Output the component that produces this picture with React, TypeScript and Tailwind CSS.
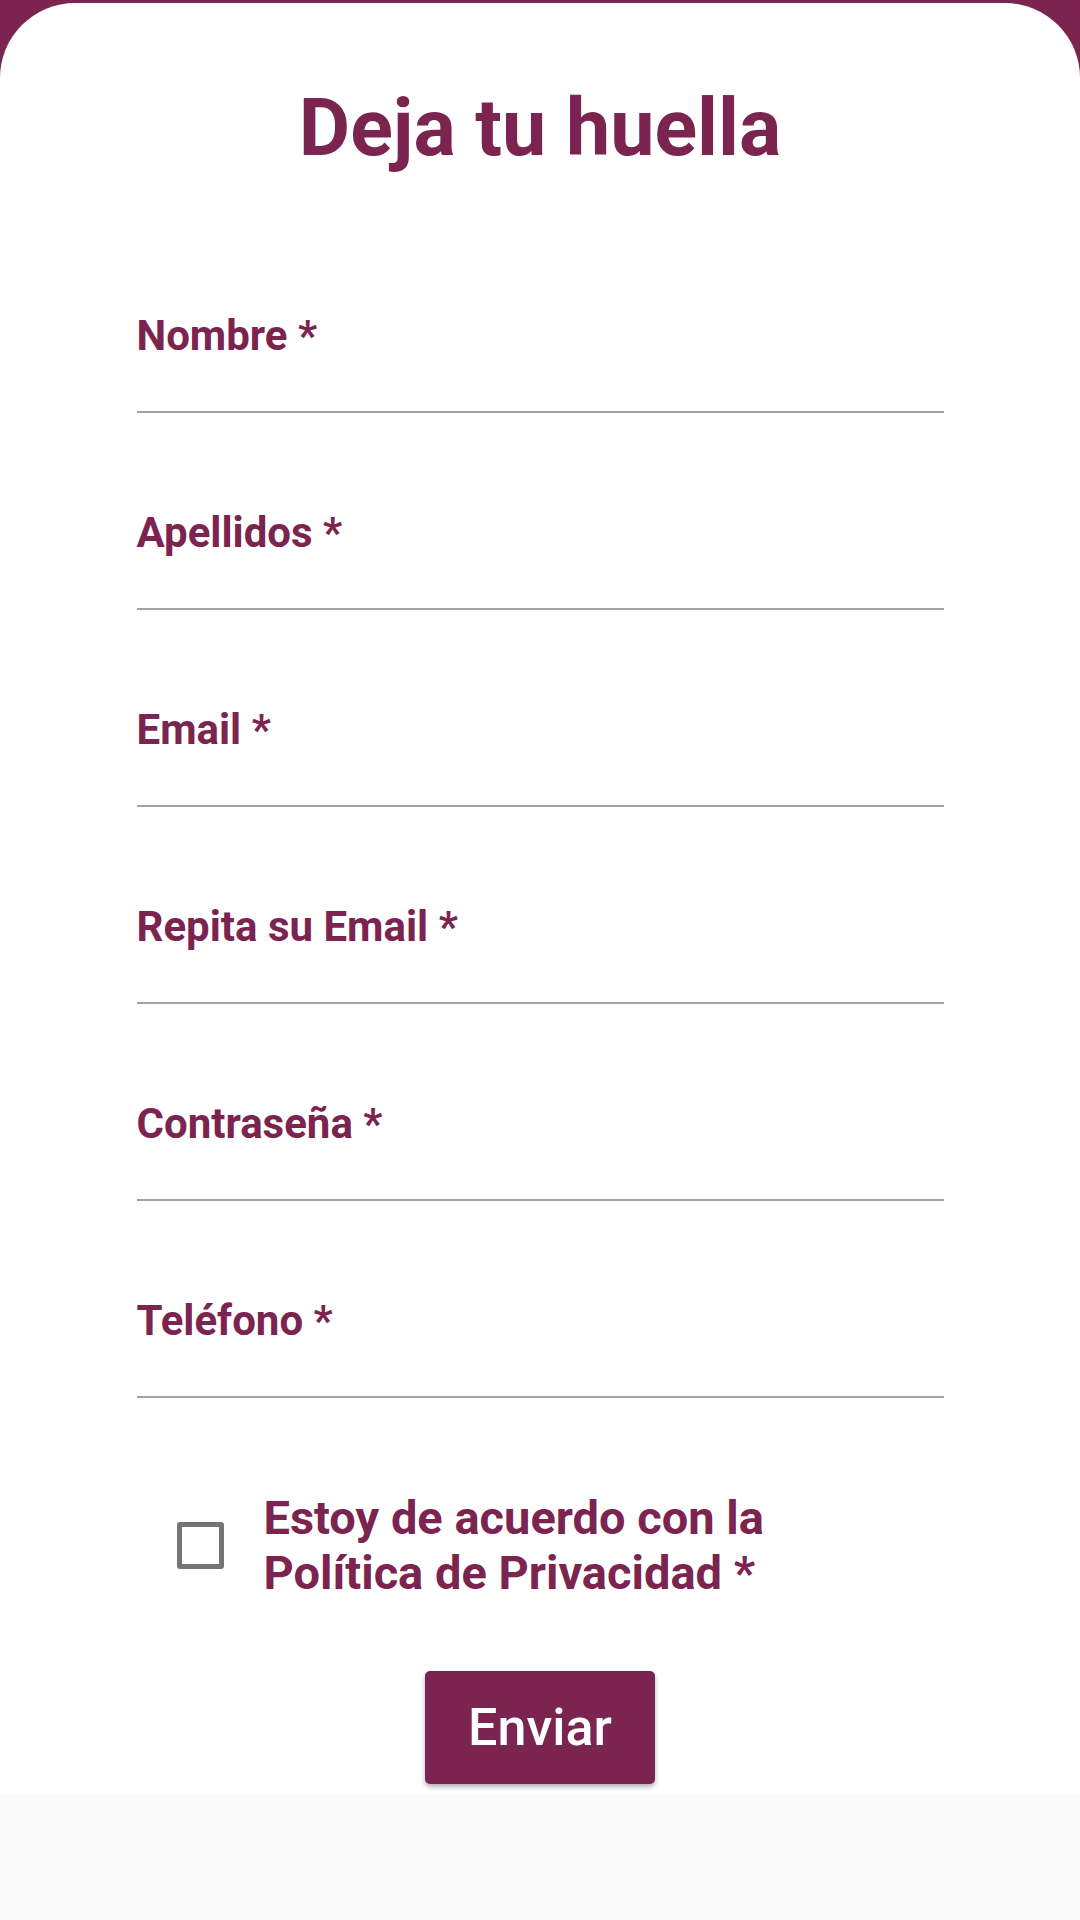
import React from "react";

const fields = [
  { id: "nombre", label: "Nombre *", type: "text" },
  { id: "apellidos", label: "Apellidos *", type: "text" },
  { id: "email", label: "Email *", type: "email" },
  { id: "email2", label: "Repita su Email *", type: "email" },
  { id: "password", label: "Contraseña *", type: "password" },
  { id: "telefono", label: "Teléfono *", type: "tel" },
];

const App = () => {
  return (
    <div
      className="min-h-[1920px] bg-[#f9f9f9]"
      style={{ fontFamily: "Roboto, 'Noto Sans', sans-serif" }}
    >
      <div className="bg-[#7b2450] pt-[3px]">
        <div className="bg-white rounded-t-[75px] pt-[77px] pb-[10px]">
          <h1 className="text-center text-[79px] leading-[96px] font-bold text-[#7b2450]">
            Deja tu huella
          </h1>

          <form className="w-[807px] mx-auto mt-[135px] flex flex-col gap-[95px]">
            {fields.map((f) => (
              <div key={f.id} className="flex flex-col">
                <label
                  htmlFor={f.id}
                  className="text-[42px] leading-[50px] font-bold text-[#7b2450]"
                >
                  {f.label}
                </label>
                <input
                  id={f.id}
                  type={f.type}
                  className="h-[52px] bg-transparent border-0 border-b-2 border-[#a3a3a3] outline-none text-[40px]"
                />
              </div>
            ))}
          </form>

          <div className="w-[807px] mx-auto mt-[92px] pl-[40px] flex items-center gap-[40px]">
            <span className="w-[47px] h-[47px] shrink-0 border-[5px] border-[#757575] rounded-[3px]" />
            <span className="text-[47px] leading-[55px] font-bold text-[#7b2450]">
              Estoy de acuerdo con la
              <br />
              Política de Privacidad *
            </span>
          </div>

          <div className="flex justify-center mt-[71px]">
            <button
              type="submit"
              className="w-[230px] h-[113px] bg-[#7b2450] text-white text-[52px] font-medium rounded-[5px] shadow-[0_3px_5px_rgba(0,0,0,0.3)]"
            >
              Enviar
            </button>
          </div>
        </div>
      </div>
    </div>
  );
};

export default App;
